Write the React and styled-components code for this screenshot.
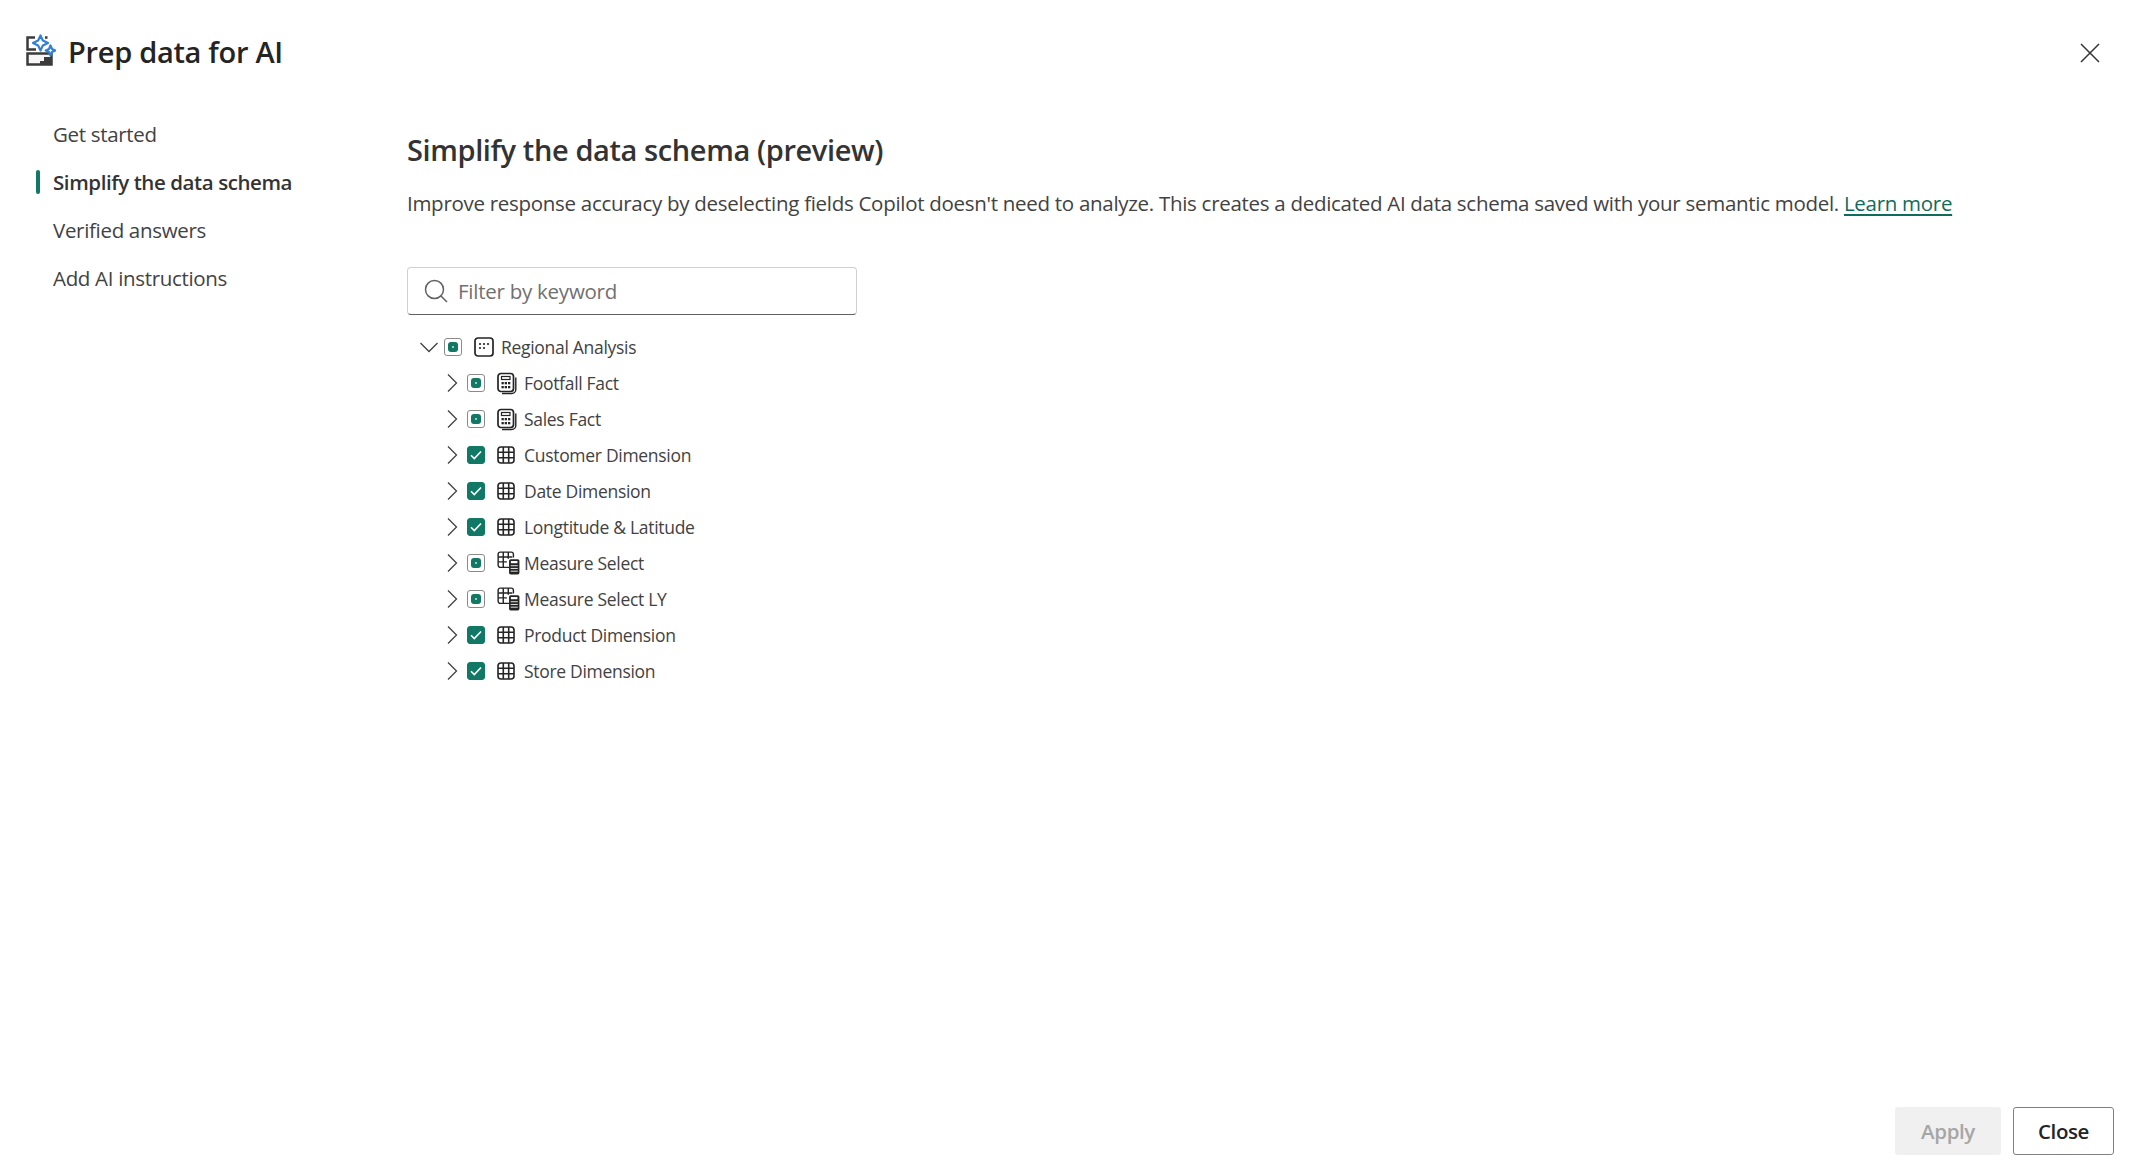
import React from "react";
import styled, { createGlobalStyle } from "styled-components";

const GlobalStyle = createGlobalStyle`
  html, body {
    margin: 0;
    padding: 0;
    background: #fff;
    font-family: "Open Sans", "Noto Sans", "Liberation Sans", sans-serif;
    color: #242424;
  }
  * { box-sizing: border-box; }
`;

const Page = styled.div`
  width: 2140px;
  height: 1176px;
  display: flex;
  flex-direction: column;
  overflow: hidden;
`;

const Header = styled.header`
  height: 104px;
  padding: 34px 39px 0 26px;
  display: flex;
  align-items: flex-start;
  gap: 12px;
`;

const Title = styled.h1`
  margin: 0;
  font-size: 29px;
  line-height: 35px;
  font-weight: 600;
  letter-spacing: -0.3px;
  color: #242424;
  flex: 1;
`;

const CloseIcon = styled.button`
  border: 0;
  background: none;
  padding: 0;
  width: 22px;
  height: 22px;
  margin-top: 8px;
  color: #333;
  display: flex;
`;

const Body = styled.div`
  flex: 1;
  display: flex;
`;

const Nav = styled.nav`
  width: 407px;
  padding: 6px 0 0 36px;
  display: flex;
  flex-direction: column;
`;

const NavItem = styled.a`
  height: 48px;
  display: flex;
  align-items: center;
  gap: 13px;
  font-size: 20.5px;
  letter-spacing: ${(p) => (p.$active ? "-0.42px" : "-0.32px")};
  font-weight: ${(p) => (p.$active ? 600 : 400)};
  color: ${(p) => (p.$active ? "#333" : "#424242")};
  &::before {
    content: "";
    width: 4px;
    height: 24px;
    border-radius: 2px;
    background: ${(p) => (p.$active ? "#117865" : "transparent")};
  }
`;

const Content = styled.main`
  flex: 1;
  padding-top: 27px;
`;

const Heading = styled.h2`
  margin: 0;
  font-size: 29px;
  line-height: 38px;
  font-weight: 600;
  letter-spacing: -0.4px;
  color: #333;
`;

const Description = styled.p`
  margin: 19px 0 0;
  font-size: 20.5px;
  line-height: 30px;
  letter-spacing: -0.29px;
  color: #424242;
  white-space: nowrap;
`;

const LearnMore = styled.a`
  color: #0f6c5b;
  text-decoration: underline;
  text-underline-offset: 3px;
`;

const Search = styled.div`
  width: 450px;
  height: 48px;
  margin-top: 49px;
  padding: 0 16px;
  display: flex;
  align-items: center;
  gap: 10px;
  border: 1px solid #d1d1d1;
  border-bottom: 1px solid #616161;
  border-radius: 4px;
  font-size: 20.5px;
  letter-spacing: -0.25px;
  color: #707070;
`;

const Tree = styled.div`
  margin-top: 14px;
  display: flex;
  flex-direction: column;
`;

const Row = styled.div`
  height: 36px;
  display: flex;
  align-items: center;
  padding-left: ${(p) => (p.$level ? 36 : 13)}px;
  font-size: 17.5px;
  letter-spacing: -0.3px;
  color: #424242;
`;

const Twisty = styled.span`
  width: 18px;
  height: 18px;
  color: #424242;
  display: flex;
  margin-right: 6px;
`;

const CheckBox = styled.span`
  width: 18px;
  height: 18px;
  border-radius: 3px;
  display: flex;
  align-items: center;
  justify-content: center;
  margin-right: 12px;
  flex: none;
  background: ${(p) => (p.$checked ? "#117865" : "#fff")};
  border: 1px solid ${(p) => (p.$checked ? "#117865" : "#8a8a8a")};
`;

const Partial = styled.span`
  width: 10px;
  height: 10px;
  border-radius: 3px;
  background: #117865;
  display: flex;
  align-items: center;
  justify-content: center;
  &::after {
    content: "";
    width: 2px;
    height: 2px;
    border-radius: 50%;
    background: #cfe6e0;
  }
`;

const TypeIcon = styled.span`
  width: 20px;
  height: 22px;
  margin-right: 7px;
  display: flex;
  align-items: center;
  flex: none;
  color: #242424;
  svg {
    flex: none;
  }
`;

const Footer = styled.footer`
  height: 70px;
  padding: 0 26px 22px 0;
  display: flex;
  justify-content: flex-end;
  align-items: flex-start;
  gap: 12px;
`;

const FooterButton = styled.button`
  height: 48px;
  width: ${(p) => p.$width}px;
  margin-top: 1px;
  border-radius: 3px;
  font-family: inherit;
  font-size: 20.5px;
  font-weight: 600;
  letter-spacing: -0.4px;
  background: ${(p) => (p.disabled ? "#f0f0f0" : "#fff")};
  color: ${(p) => (p.disabled ? "#a6a6a6" : "#242424")};
  border: 1px solid ${(p) => (p.disabled ? "#f0f0f0" : "#808080")};
`;

const PrepIcon = () => (
  <svg width="30" height="32" viewBox="0 0 30 32" fill="none">
    <path d="M9 3.500H1.500v12H10M19 3.500h2.500" stroke="#3b3b3b" strokeWidth="2.500" />
    <path d="M1.500 19.500h24v11h-24z" fill="#f6f6f6" stroke="#3b3b3b" strokeWidth="2.500" />
    <path d="M18 23h7v7H14v-3h4z" fill="#3b3b3b" />
    <path d="M14.500 1.500l2.400 5.100 5.100 2.400-5.100 2.400-2.400 5.100-2.400-5.100L7 9l5.100-2.400z" fill="#fff" stroke="#2f80d8" strokeWidth="2.200" strokeLinejoin="round" />
    <path d="M24.500 11.500l1.500 3.500 3.300 1.500-3.300 1.500-1.500 3.500-1.500-3.500-3.300-1.500 3.300-1.500z" fill="#fff" stroke="#2f80d8" strokeWidth="2.200" strokeLinejoin="round" />
  </svg>
);

const Cross = () => (
  <svg width="22" height="22" viewBox="0 0 22 22" fill="none" stroke="currentColor" strokeWidth="1.500">
    <path d="M2 2l18 18M20 2L2 20" />
  </svg>
);

const SearchGlyph = () => (
  <svg width="24" height="24" viewBox="0 0 24 24" fill="none" stroke="#616161" strokeWidth="1.500">
    <circle cx="10.500" cy="10.500" r="9" />
    <path d="M17 17l6 6" />
  </svg>
);

const Chevron = ({ open }) => (
  <svg width="18" height="18" viewBox="0 0 18 18" fill="none" stroke="currentColor" strokeWidth="1.300">
    {open ? <path d="M0.500 5l8.500 8.500L17.500 5" /> : <path d="M5 0.500L13.500 9 5 17.500" />}
  </svg>
);

const Tick = () => (
  <svg width="12" height="10" viewBox="0 0 12 10" fill="none" stroke="#fff" strokeWidth="1.600">
    <path d="M1 5.200l3.300 3.300L11 1.500" />
  </svg>
);

const ModelIcon = () => (
  <svg width="20" height="20" viewBox="0 0 20 20" fill="none">
    <rect x="1" y="1" width="18" height="18" rx="3" stroke="#242424" strokeWidth="1.700" />
    <g fill="#242424">
      <circle cx="6" cy="7" r="1.100" />
      <circle cx="10" cy="7" r="1.100" />
      <circle cx="14" cy="7" r="1.100" />
      <circle cx="6" cy="11" r="1.100" />
      <circle cx="10" cy="11" r="1.100" />
    </g>
  </svg>
);

const CalcIcon = () => (
  <svg width="20" height="23" viewBox="0 0 20 22" fill="none" stroke="#242424">
    <rect x="1" y="1" width="15.500" height="18" rx="3" strokeWidth="1.700" />
    <path d="M18.800 5v12a4 4 0 0 1-4 4H5" strokeWidth="1.400" />
    <rect x="4.500" y="4" width="8.500" height="3" strokeWidth="1.200" />
    <g fill="#242424" stroke="none">
      <rect x="4.500" y="9.500" width="2.300" height="2.300" />
      <rect x="7.700" y="9.500" width="2.300" height="2.300" />
      <rect x="11" y="9.500" width="2.300" height="2.300" />
      <rect x="4.500" y="13.500" width="2.300" height="2.300" />
      <rect x="7.700" y="13.500" width="2.300" height="2.300" />
      <rect x="11" y="13.500" width="2.300" height="2.300" />
    </g>
  </svg>
);

const TableIcon = () => (
  <svg width="18" height="18" viewBox="0 0 18 18" fill="none" stroke="#242424" strokeWidth="1.600">
    <rect x="1" y="1" width="16" height="16" rx="3" />
    <path d="M6.300 1v16M11.700 1v16M1 6.300h16M1 11.700h16" />
  </svg>
);

const MeasureIcon = () => (
  <svg width="23" height="24" viewBox="0 0 21 22" fill="none" stroke="#242424" strokeWidth="1.300">
    <path d="M11 15H3a2 2 0 0 1-2-2V3a2 2 0 0 1 2-2h10a2 2 0 0 1 2 2v3" />
    <path d="M5.700 1v14M10.300 1v6M1 5.500h13M1 10h8" />
    <rect x="11" y="7.500" width="9.500" height="14" rx="1.500" fill="#242424" stroke="none" />
    <rect x="12.700" y="9.200" width="6" height="2" fill="#fff" stroke="none" />
    <path d="M12.500 13.500h6.500M12.500 16h6.500M12.500 18.500h6.500" stroke="#fff" strokeWidth="0.800" />
  </svg>
);

const icons = {
  calc: <CalcIcon />,
  table: <TableIcon />,
  measure: <MeasureIcon />,
};

const tables = [
  { name: "Footfall Fact", icon: "calc", checked: false },
  { name: "Sales Fact", icon: "calc", checked: false },
  { name: "Customer Dimension", icon: "table", checked: true },
  { name: "Date Dimension", icon: "table", checked: true },
  { name: "Longtitude & Latitude", icon: "table", checked: true },
  { name: "Measure Select", icon: "measure", checked: false },
  { name: "Measure Select LY", icon: "measure", checked: false },
  { name: "Product Dimension", icon: "table", checked: true },
  { name: "Store Dimension", icon: "table", checked: true },
];

const navItems = ["Get started", "Simplify the data schema", "Verified answers", "Add AI instructions"];

export default function App() {
  return (
    <>
      <GlobalStyle />
      <Page>
        <Header>
          <PrepIcon />
          <Title>Prep data for AI</Title>
          <CloseIcon aria-label="Close">
            <Cross />
          </CloseIcon>
        </Header>
        <Body>
          <Nav>
            {navItems.map((item, i) => (
              <NavItem key={item} $active={i === 1}>
                {item}
              </NavItem>
            ))}
          </Nav>
          <Content>
            <Heading>Simplify the data schema (preview)</Heading>
            <Description>
              Improve response accuracy by deselecting fields Copilot doesn't need to analyze. This creates a dedicated
              AI data schema saved with your semantic model. <LearnMore>Learn more</LearnMore>
            </Description>
            <Search>
              <SearchGlyph />
              Filter by keyword
            </Search>
            <Tree>
              <Row>
                <Twisty>
                  <Chevron open />
                </Twisty>
                <CheckBox>
                  <Partial />
                </CheckBox>
                <TypeIcon>
                  <ModelIcon />
                </TypeIcon>
                Regional Analysis
              </Row>
              {tables.map((t) => (
                <Row key={t.name} $level={1}>
                  <Twisty>
                    <Chevron />
                  </Twisty>
                  <CheckBox $checked={t.checked}>{t.checked ? <Tick /> : <Partial />}</CheckBox>
                  <TypeIcon>{icons[t.icon]}</TypeIcon>
                  {t.name}
                </Row>
              ))}
            </Tree>
          </Content>
        </Body>
        <Footer>
          <FooterButton disabled $width={106}>
            Apply
          </FooterButton>
          <FooterButton $width={101}>Close</FooterButton>
        </Footer>
      </Page>
    </>
  );
}
